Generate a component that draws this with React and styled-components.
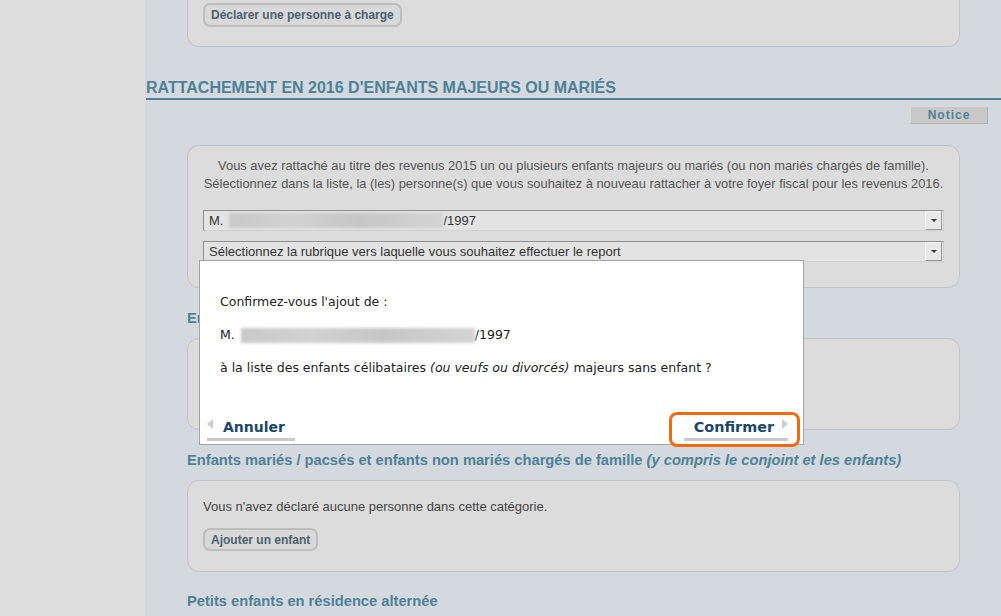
import React from 'react'
import styled, { createGlobalStyle } from 'styled-components'

const Global = createGlobalStyle`
html, body {
  margin: 0;
  padding: 0;
  background: #dedede;
}
body {
  font-family: "Liberation Sans", Arial, sans-serif;
  font-size: 13px;
  color: #444;
}
`;

const Page = styled.div`
display: grid;
grid-template-columns: 145px minmax(0, 1fr);
height: 616px;
overflow: hidden;
position: relative;
`;

const Side = styled.div`
background: #dedede;
`;

const Main = styled.main`
background: #d4d9e0;
display: flex;
flex-direction: column;
min-width: 0;
`;

const Box = styled.div`
margin: ${p => p.$mt || 0}px 41px 0 42px;
background: #dcdcdc;
border: 1px solid #c4c4c4;
border-radius: 12px;
padding: ${p => p.$pad};
${p => p.$cut && `
  border-top: none;
  border-radius: 0 0 12px 12px;
`}
`;

const PillButton = styled.button`
font-family: "Liberation Sans", Arial, sans-serif;
font-size: 12px;
font-weight: bold;
color: #4c6070;
background: #d8d8d8;
border: 2px solid #bdbdbd;
border-radius: 7px;
height: ${p => p.$h || 24}px;
padding: 0 6px;
display: block;
`;

const Title = styled.h1`
margin: 31px 0 0 1px;
font-size: 16px;
line-height: 19px;
font-weight: bold;
color: #4e8196;
border-bottom: 2px solid #4e8196;
padding-bottom: 1px;
`;

const NoticeRow = styled.div`
display: flex;
justify-content: flex-end;
padding: 6px 13px 0 0;
`;

const Notice = styled.div`
width: 76px;
height: 16px;
background: #c9c9c9;
border: 1px solid #b3b3b3;
border-top-color: #dadada;
border-left-color: #dadada;
color: #4e8196;
font-weight: bold;
font-size: 12px;
letter-spacing: 1px;
text-align: center;
line-height: 16px;
`;

const Intro = styled.p`
margin: 0;
text-align: center;
line-height: 18px;
font-size: 12.9px;
color: #555;
white-space: nowrap;
`;

const Select = styled.div`
height: 19px;
margin-top: ${p => p.$mt}px;
background: #e3e3e3;
border: 1px solid #8f8f8f;
border-right-color: #d0d0d0;
border-bottom-color: #d0d0d0;
display: flex;
align-items: center;
padding-left: 5px;
color: #333;
font-size: 13px;
`;

const SelectText = styled.span`
flex: 1;
display: flex;
align-items: center;
white-space: nowrap;
`;

const Arrow = styled.span`
width: 15px;
height: 17px;
margin-right: 1px;
background: #e8e8e8;
border: 1px solid #f4f4f4;
border-right-color: #9a9a9a;
border-bottom-color: #9a9a9a;
display: flex;
align-items: center;
justify-content: center;
&::after {
  content: "";
  border-left: 3px solid transparent;
  border-right: 3px solid transparent;
  border-top: 3px solid #333;
}
`;

const Blur = styled.span`
display: inline-block;
vertical-align: middle;
width: ${p => p.$w}px;
height: 15px;
margin: 0 0 0 6px;
background: linear-gradient(90deg, #c9c9c9, #d2d2d2 30%, #c6c6c6 60%, #d4d4d4);
filter: blur(1.5px);
`;

const Sub = styled.h2`
margin: ${p => p.$mt}px 0 0 42px;
font-size: 14.7px;
line-height: 16px;
font-weight: bold;
color: #4e8196;
white-space: nowrap;
em { font-style: italic; }
`;

const Line = styled.p`
margin: 0 0 13px;
line-height: 16px;
color: #444;
`;

const Modal = styled.div`
position: absolute;
left: 199px;
top: 260px;
width: 603px;
height: 183px;
background: #fff;
border: 1px solid #a3a3a3;
font-family: "DejaVu Sans", Verdana, sans-serif;
font-size: 12.5px;
color: #222;
display: flex;
flex-direction: column;
`;

const ModalBody = styled.div`
padding: 33px 20px 0 20px;
display: flex;
flex-direction: column;
gap: 17px;
flex: 1;
`;

const ModalLine = styled.p`
margin: 0;
line-height: 16px;
white-space: nowrap;
`;

const Actions = styled.div`
display: flex;
justify-content: space-between;
align-items: flex-end;
padding: 0 3px 3px 7px;
`;

const Link = styled.a`
display: flex;
align-items: center;
gap: ${p => p.$gap}px;
font-family: "DejaVu Sans", Verdana, sans-serif;
font-weight: bold;
font-size: ${p => p.$fs || 14}px;
color: #1b4668;
text-decoration: none;
padding: 0 ${p => p.$pr || 0}px 2px ${p => p.$pl || 0}px;
border-bottom: 3px solid #c9c9c9;
line-height: 18px;
`;

const Focus = styled.div`
border: 3px solid #f26b10;
border-radius: 8px;
padding: 3px 9px 3px 12px;
margin-bottom: -6px;
`;

const Tri = styled.span`
width: 0;
height: 0;
border-top: 5px solid transparent;
border-bottom: 5px solid transparent;
${p => p.$dir === 'left'
  ? 'border-right: 6px solid #cfcfcf;'
  : 'border-left: 6px solid #cfcfcf;'}
margin-top: -7px;
`;

export default function App() {
  return (
    <>
      <Global />
      <Page>
        <Side />
        <Main>
          <Box $cut $pad="3px 15px 19px">
            <PillButton>Déclarer une personne à charge</PillButton>
          </Box>

          <Title>RATTACHEMENT EN 2016 D'ENFANTS MAJEURS OU MARIÉS</Title>
          <NoticeRow><Notice>Notice</Notice></NoticeRow>

          <Box $mt={21} $pad="11px 15px 25px 15px">
            <Intro>
              Vous avez rattaché au titre des revenus 2015 un ou plusieurs enfants majeurs ou mariés (ou non mariés chargés de famille).<br />
              Sélectionnez dans la liste, la (les) personne(s) que vous souhaitez à nouveau rattacher à votre foyer fiscal pour les revenus 2016.
            </Intro>
            <Select $mt={17}>
              <SelectText>M.<Blur $w={214} />/1997</SelectText>
              <Arrow />
            </Select>
            <Select $mt={10}>
              <SelectText>Sélectionnez la rubrique vers laquelle vous souhaitez effectuer le report</SelectText>
              <Arrow />
            </Select>
          </Box>

          <Sub $mt={22}>Enfants célibataires <em>(ou veufs ou divorcés)</em> majeurs sans enfant</Sub>
          <Box $mt={12} $pad="18px 15px 20px">
            <Line>Vous n'avez déclaré aucune personne dans cette catégorie.</Line>
            <PillButton $h={23}>Ajouter un enfant</PillButton>
          </Box>

          <Sub $mt={22}>Enfants mariés / pacsés et enfants non mariés chargés de famille <em>(y compris le conjoint et les enfants)</em></Sub>
          <Box $mt={12} $pad="18px 15px 20px">
            <Line>Vous n'avez déclaré aucune personne dans cette catégorie.</Line>
            <PillButton $h={23}>Ajouter un enfant</PillButton>
          </Box>

          <Sub $mt={21}>Petits enfants en résidence alternée</Sub>
        </Main>

        <Modal>
          <ModalBody>
            <ModalLine>Confirmez-vous l'ajout de :</ModalLine>
            <ModalLine>M.<Blur $w={234} />/1997</ModalLine>
            <ModalLine>à la liste des enfants célibataires <i>(ou veufs ou divorcés)</i> majeurs sans enfant ?</ModalLine>
          </ModalBody>
          <Actions>
            <Link $gap={10} $pr={10}><Tri $dir="left" />Annuler</Link>
            <Focus>
              <Link $gap={8} $pl={10} $fs={14.4}>Confirmer<Tri $dir="right" /></Link>
            </Focus>
          </Actions>
        </Modal>
      </Page>
    </>
  )
}
